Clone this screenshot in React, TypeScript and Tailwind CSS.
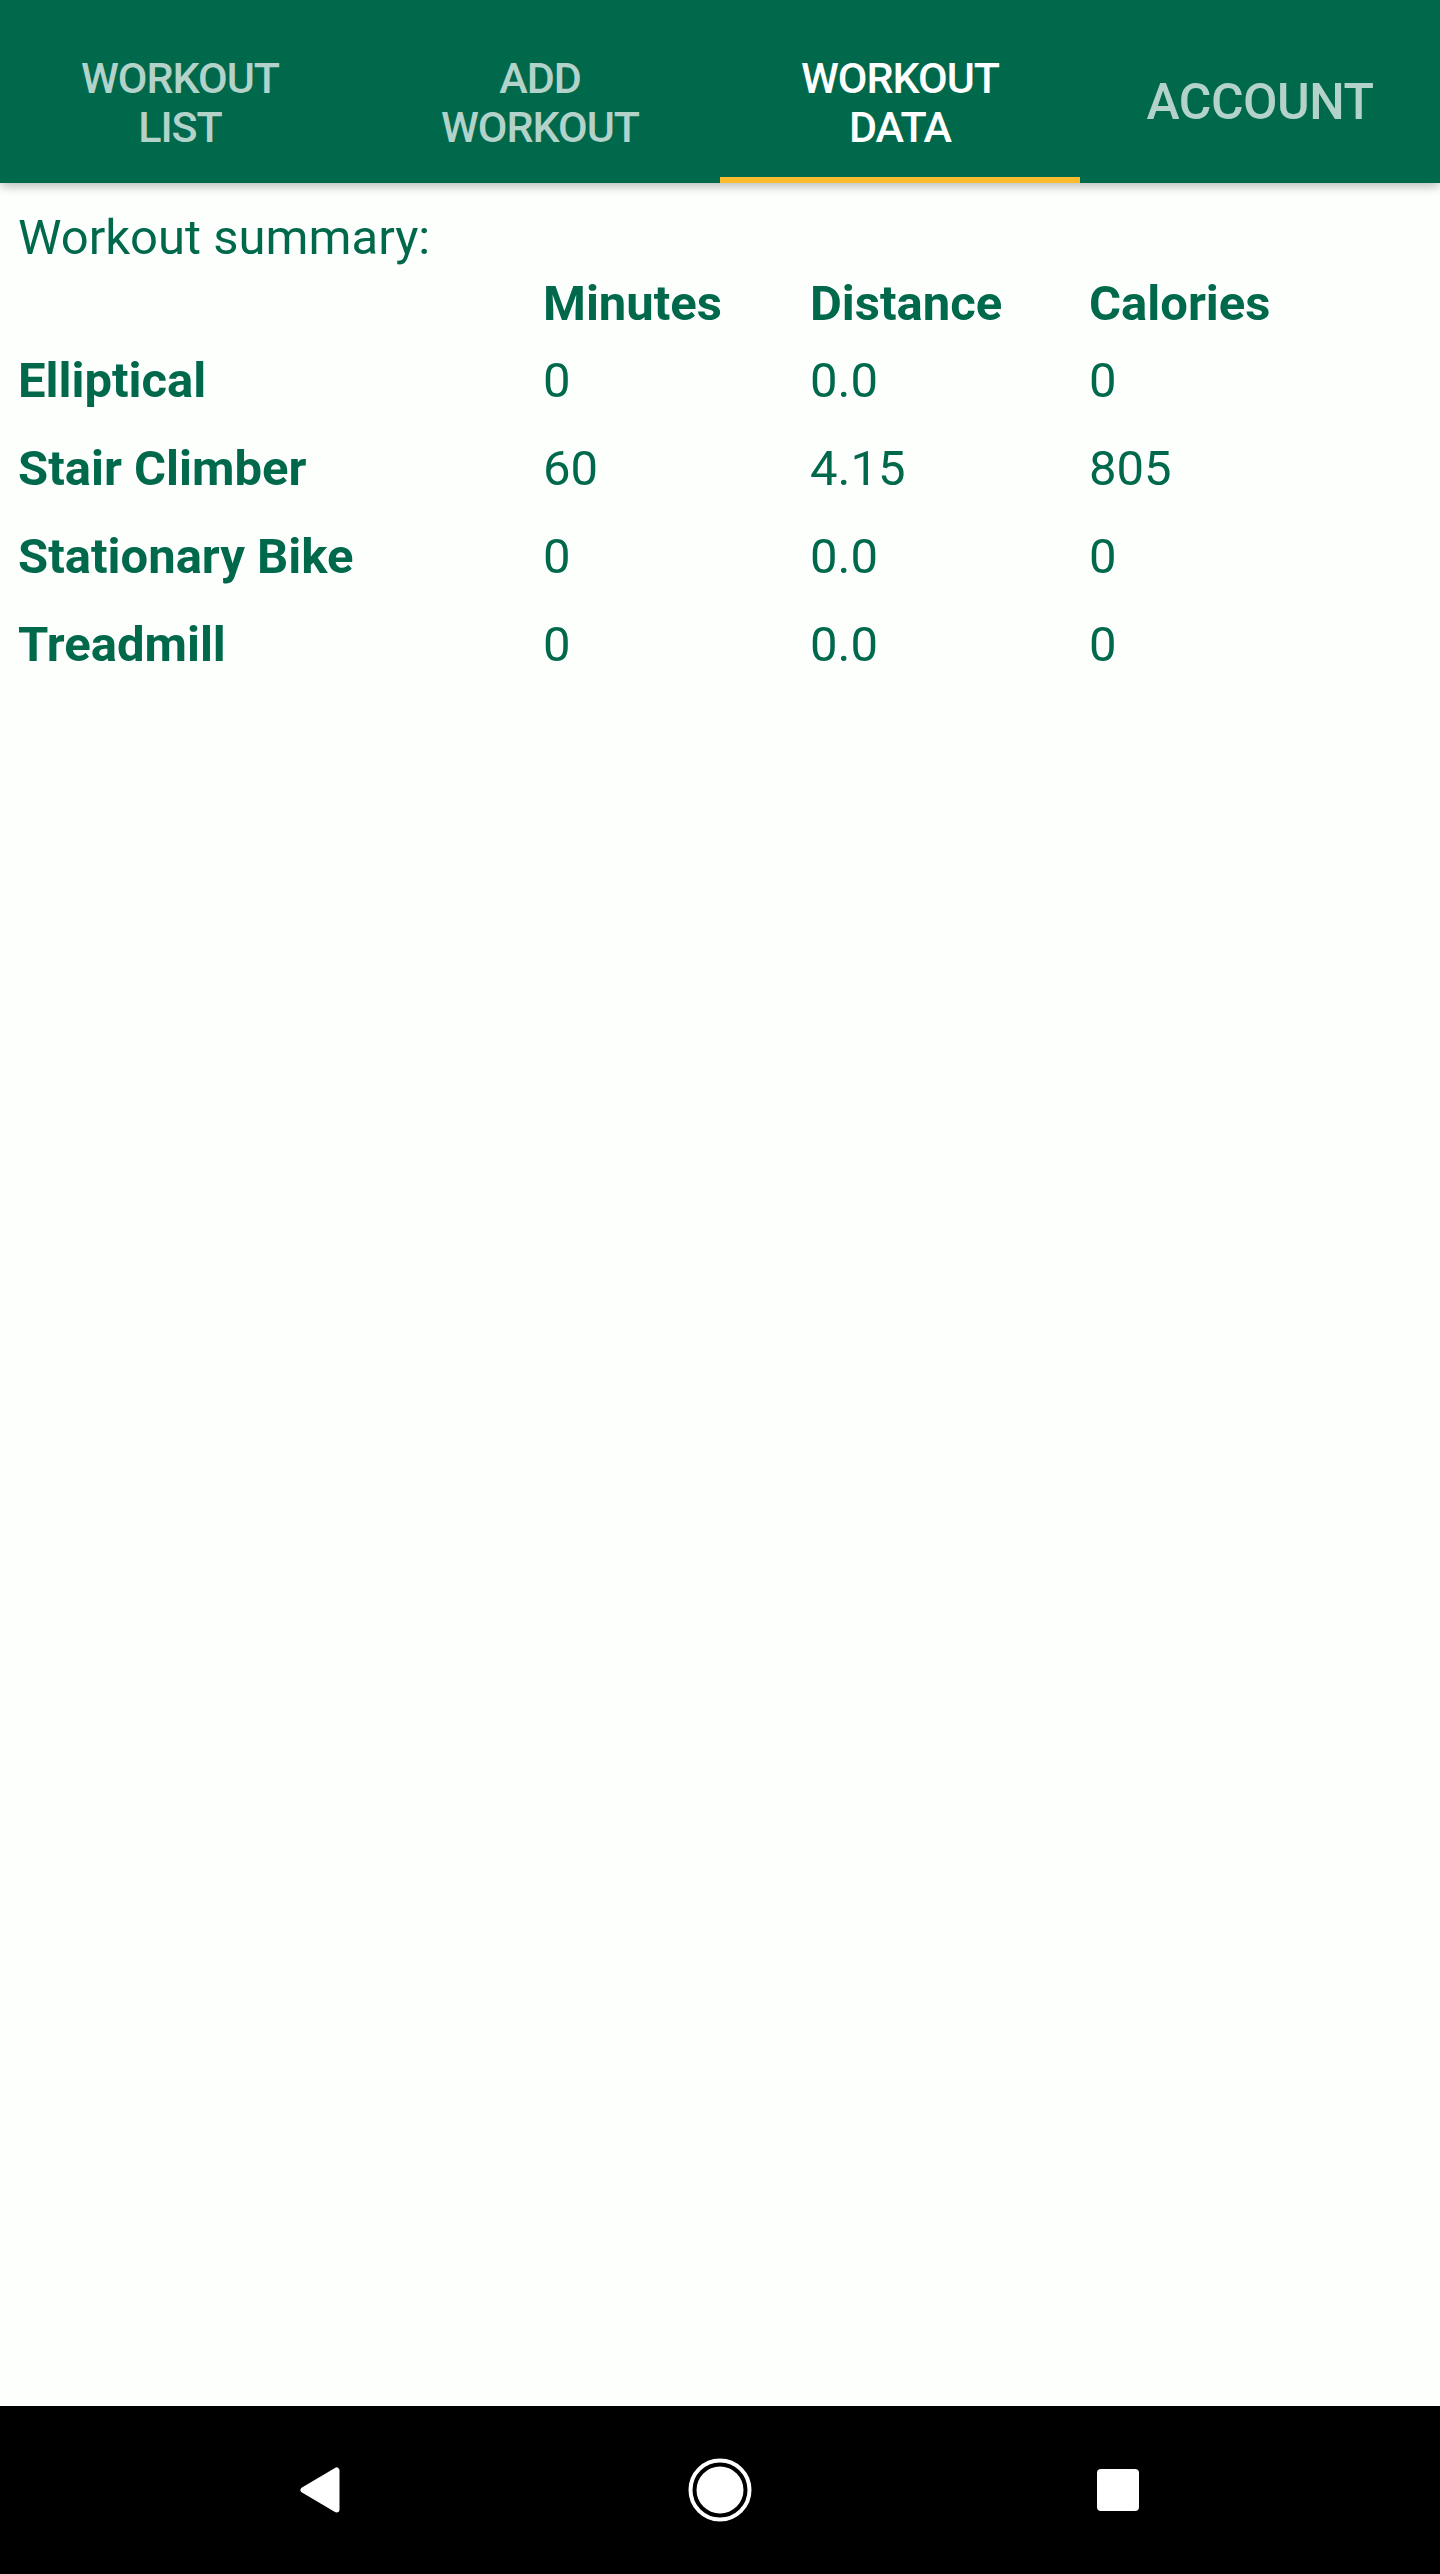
import React from "react";

const GREEN = "text-[#00694b]";

function Tab({ lines, active, single }: { lines: string[]; active?: boolean; single?: boolean }) {
  return (
    <div className="relative w-[360px] h-full flex flex-col items-center">
      <div
        className={
          (single
            ? "pt-[73px] text-[50px] leading-[58px] tracking-[-0.5px]"
            : "pt-[54px] text-[43px] leading-[49px] tracking-[-1px]") +
          " font-medium text-center " +
          (active ? "text-white" : "text-[#b3d2c9]")
        }
      >
        {lines.map((l) => (
          <div key={l}>{l}</div>
        ))}
      </div>
      {active && <div className="absolute bottom-0 left-0 right-0 h-[6px] bg-[#fbbc2e]" />}
    </div>
  );
}

const rows = [
  ["Elliptical", "0", "0.0", "0"],
  ["Stair Climber", "60", "4.15", "805"],
  ["Stationary Bike", "0", "0.0", "0"],
  ["Treadmill", "0", "0.0", "0"],
];

export default function App() {
  return (
    <div
      className="w-[1440px] h-[2574px] flex flex-col bg-[#fdfffd] overflow-hidden"
      style={{ fontFamily: "Roboto, 'Noto Sans', sans-serif" }}
    >
      <div className="relative z-10 h-[183px] bg-[#00694b] flex shadow-[0_3px_10px_rgba(0,0,0,0.28)]">
        <Tab lines={["WORKOUT", "LIST"]} />
        <Tab lines={["ADD", "WORKOUT"]} />
        <Tab lines={["WORKOUT", "DATA"]} active />
        <Tab lines={["ACCOUNT"]} single />
      </div>

      <div className={"flex-1 pl-[18px] text-[49px] leading-[57px] " + GREEN}>
        <div className="mt-[26px]">Workout summary:</div>
        <div className="mt-[9px] grid grid-cols-[525px_267px_279px_1fr] font-bold">
          <div />
          <div>Minutes</div>
          <div>Distance</div>
          <div>Calories</div>
        </div>
        <div className="mt-[20px] flex flex-col gap-y-[31px]">
          {rows.map((r) => (
            <div key={r[0]} className="grid grid-cols-[525px_267px_279px_1fr]">
              <div className="font-bold">{r[0]}</div>
              <div>{r[1]}</div>
              <div>{r[2]}</div>
              <div>{r[3]}</div>
            </div>
          ))}
        </div>
      </div>

      <div className="h-[168px] bg-black flex items-center">
        <div className="ml-[260px] w-[120px] flex justify-center">
          <svg width="40" height="46" viewBox="0 0 40 46">
            <polygon
              points="3.5,23 36.5,3.5 36.5,42.5"
              fill="white"
              stroke="white"
              strokeWidth="6"
              strokeLinejoin="round"
            />
          </svg>
        </div>
        <div className="ml-[280px] w-[120px] flex justify-center">
          <svg width="64" height="64" viewBox="0 0 64 64">
            <circle cx="32" cy="32" r="29.5" fill="none" stroke="white" strokeWidth="4" />
            <circle cx="32" cy="32" r="23.5" fill="white" />
          </svg>
        </div>
        <div className="ml-[278px] w-[120px] flex justify-center">
          <div className="w-[42px] h-[42px] bg-white rounded-[4px]" />
        </div>
      </div>
    </div>
  );
}
